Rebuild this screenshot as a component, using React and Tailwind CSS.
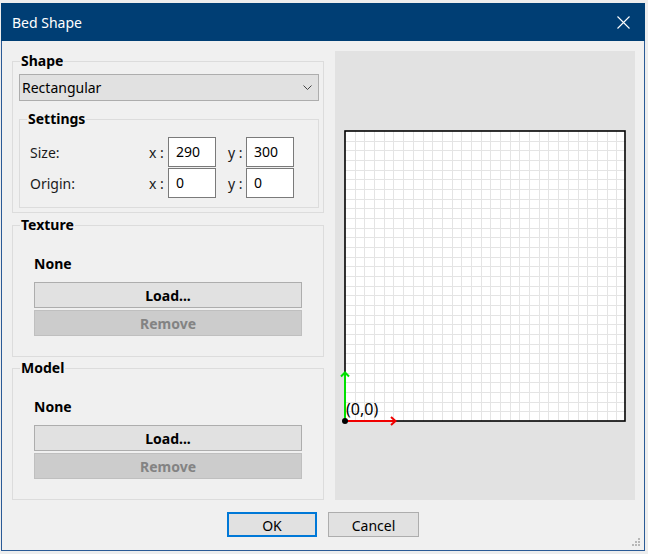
import React from "react";

const FONT = { fontFamily: '"Segoe UI", "Noto Sans", "Open Sans", sans-serif' };

function Group({ label, className = "", inner = "", children }) {
  return (
    <fieldset className={`border border-[#dcdcdc] ${className}`}>
      <legend className="ml-[7px] px-[1px] text-[14px] font-bold leading-[20px] text-black">
        {label}
      </legend>
      <div className={inner}>{children}</div>
    </fieldset>
  );
}

function Field({ value }) {
  return (
    <div className="w-[48px] h-[30px] border border-[#7a7a7a] bg-white pl-[7px] text-[14px] leading-[28px] text-black">
      {value}
    </div>
  );
}

function FileSection({ label, className = "" }) {
  return (
    <Group label={label} className={className} inner="px-[21px]">
      <div className="mt-[19px] text-[14px] font-bold leading-[20px] text-black">None</div>
      <button className="mt-[8px] w-[268px] h-[26px] pt-[2px] border border-[#adadad] bg-[#e1e1e1] text-[14px] font-bold leading-[20px] text-black">
        Load...
      </button>
      <button className="mt-[2px] w-[268px] h-[26px] pt-[2px] border border-[#bfbfbf] bg-[#cccccc] text-[14px] font-bold leading-[20px] text-[#838383]">
        Remove
      </button>
    </Group>
  );
}

function BedPreview() {
  const bx = 10;
  const by = 80;
  const bw = 281;
  const bh = 290;
  const xs = Array.from({ length: 28 }, (_, i) => bx + ((i + 1) * bw) / 29);
  const ys = Array.from({ length: 29 }, (_, i) => by + ((i + 1) * bh) / 30);
  return (
    <svg width="300" height="449" className="block">
      <rect x={bx} y={by} width={bw} height={bh} fill="#ffffff" />
      {xs.map((x) => (
        <line key={"x" + x} x1={Math.round(x) + 0.5} y1={by} x2={Math.round(x) + 0.5} y2={by + bh} stroke="#e4e4e4" strokeWidth="1" />
      ))}
      {ys.map((y) => (
        <line key={"y" + y} x1={bx} y1={Math.round(y) + 0.5} x2={bx + bw} y2={Math.round(y) + 0.5} stroke="#e4e4e4" strokeWidth="1" />
      ))}
      <rect x={bx} y={by} width={bw - 1} height={bh} fill="none" stroke="#000" strokeWidth="1.6" />
      <line x1="10" y1="370" x2="10" y2="321" stroke="#00e000" strokeWidth="2" />
      <polyline points="6,325.5 10,321.5 14,325.5" fill="none" stroke="#00e000" strokeWidth="2" />
      <line x1="10" y1="370" x2="61" y2="370" stroke="#f00000" strokeWidth="2" />
      <polyline points="56,366 60.5,370 56,374" fill="none" stroke="#f00000" strokeWidth="2" />
      <circle cx="10" cy="370" r="3" fill="#000" />
      <text x="11" y="364" fontSize="16" fill="#000" style={FONT}>(0,0)</text>
    </svg>
  );
}

export default function App() {
  return (
    <div className="w-[648px] h-[554px] bg-[#ededed] pl-[1px] pt-[3px]" style={FONT}>
      <div className="w-[644px] h-[548px] flex flex-col border-x border-b border-[#2a5a96] bg-[#f0f0f0]">
        {/* title bar */}
        <div className="h-[38px] -mx-[1px] flex items-center justify-between bg-[#003e74] pl-[11px] pr-[15px]">
          <span className="text-[14px] text-white">Bed Shape</span>
          <svg width="13" height="13" viewBox="0 0 13 13">
            <path d="M0.5 0.5 L12.5 12.5 M12.5 0.5 L0.5 12.5" stroke="#fff" strokeWidth="1.1" />
          </svg>
        </div>

        <div className="flex gap-[11px] pl-[10px] pt-[10px]">
          {/* left column */}
          <div className="w-[312px] flex flex-col">
            <Group label="Shape" className="h-[162px]" inner="pl-[6px] pr-[4px]">
              <div className="mt-[3px] h-[27px] flex items-center justify-between border border-[#adadad] bg-[#e1e1e1] pl-[2px] pr-[6px] text-[14px] text-black">
                <span>Rectangular</span>
                <svg width="9" height="6" viewBox="0 0 9 6">
                  <polyline points="0.5,0.5 4.5,4.5 8.5,0.5" fill="none" stroke="#444" strokeWidth="1" />
                </svg>
              </div>
              <Group label="Settings" className="mt-[8px] h-[99px]" inner="pl-[10px]">
                <div className="mt-[8px] flex flex-col gap-[1px] text-[14px] text-[#1a1a1a]">
                  <div className="flex items-center">
                    <span className="w-[119px]">Size:</span>
                    <span className="w-[19px]">x :</span>
                    <Field value="290" />
                    <span className="w-[30px] pl-[12px]">y :</span>
                    <Field value="300" />
                  </div>
                  <div className="flex items-center">
                    <span className="w-[119px]">Origin:</span>
                    <span className="w-[19px]">x :</span>
                    <Field value="0" />
                    <span className="w-[30px] pl-[12px]">y :</span>
                    <Field value="0" />
                  </div>
                </div>
              </Group>
            </Group>
            <FileSection label="Texture" className="mt-[2px] h-[142px]" />
            <FileSection label="Model" className="mt-[1px] h-[142px]" />
          </div>

          {/* preview */}
          <div className="w-[300px] h-[449px] bg-[#e2e2e2]">
            <BedPreview />
          </div>
        </div>

        <div className="flex justify-center gap-[11px] mt-[12px]">
          <button className="w-[90px] h-[25px] pt-[2px] border-2 border-[#0078d7] bg-[#e1e1e1] text-[14px] leading-[18px] text-black">
            OK
          </button>
          <button className="w-[91px] h-[25px] pt-[2px] border border-[#adadad] bg-[#e1e1e1] text-[14px] leading-[20px] text-black">
            Cancel
          </button>
        </div>

        <div className="flex-1 flex items-end justify-end pr-[3px] pb-[3px]">
          <svg width="9" height="9" viewBox="0 0 9 9">
            <rect x="6" y="0" width="2" height="2" fill="#b8b8b8" />
            <rect x="3" y="3" width="2" height="2" fill="#b8b8b8" />
            <rect x="6" y="3" width="2" height="2" fill="#b8b8b8" />
            <rect x="0" y="6" width="2" height="2" fill="#b8b8b8" />
            <rect x="3" y="6" width="2" height="2" fill="#b8b8b8" />
            <rect x="6" y="6" width="2" height="2" fill="#b8b8b8" />
          </svg>
        </div>
      </div>
    </div>
  );
}
